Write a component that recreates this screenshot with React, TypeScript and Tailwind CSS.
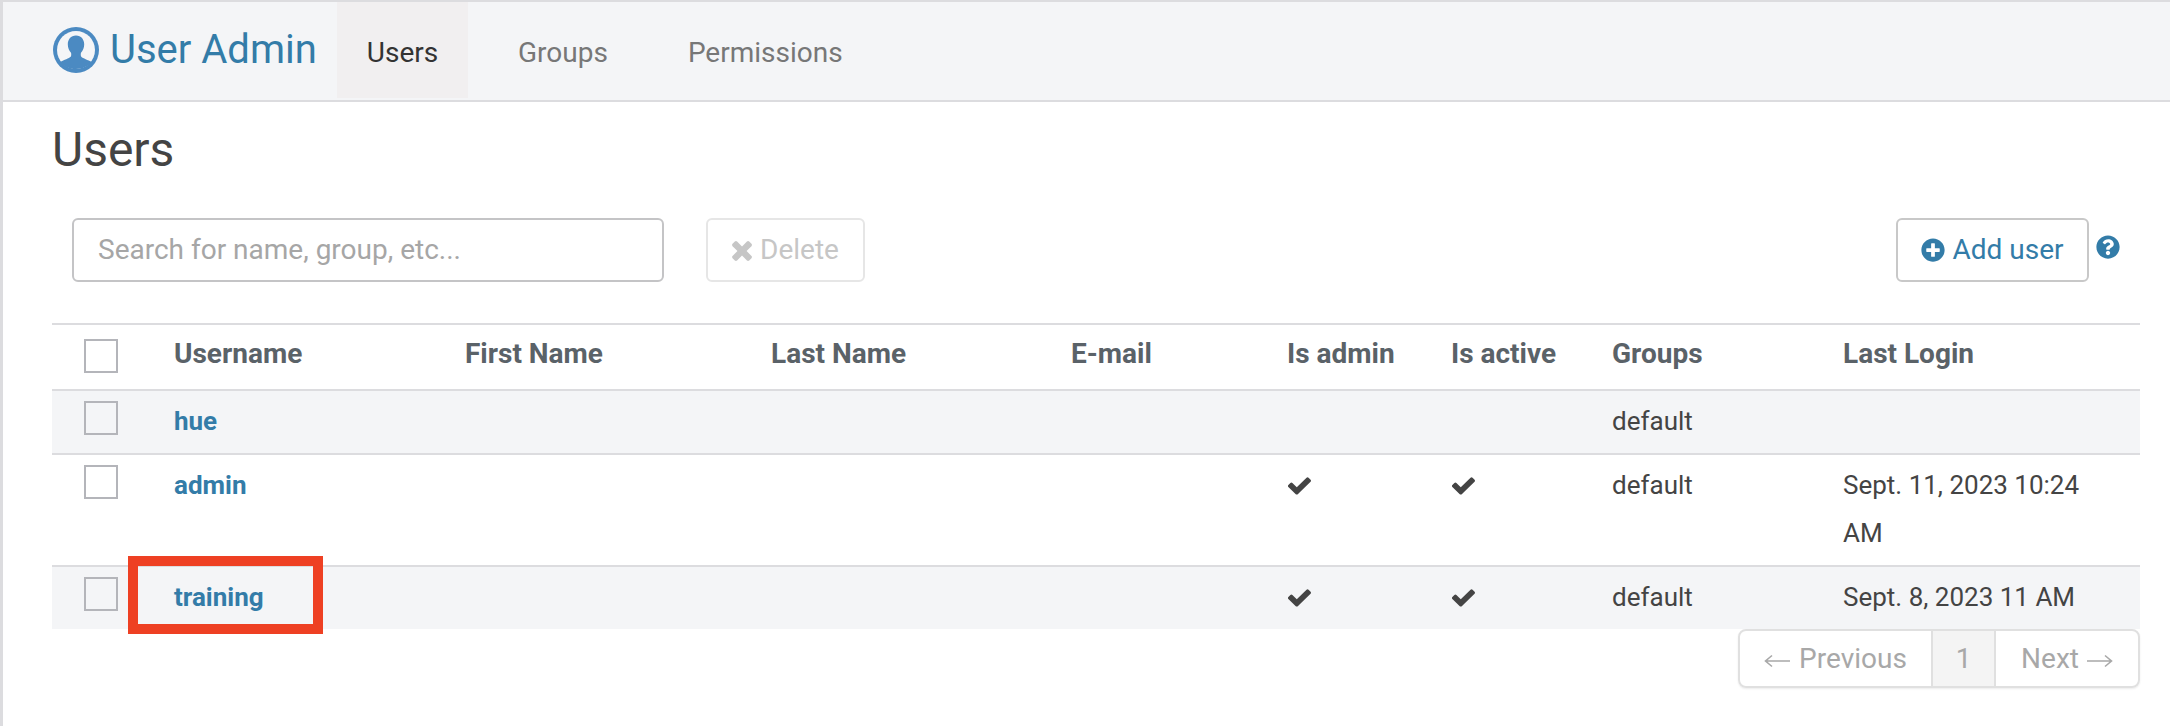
import React from "react";
import { FaPlusCircle, FaQuestionCircle } from "react-icons/fa";

const headers = [
  ["Username", "w-[291px]"],
  ["First Name", "w-[306px]"],
  ["Last Name", "w-[300px]"],
  ["E-mail", "w-[216px]"],
  ["Is admin", "w-[164px]"],
  ["Is active", "w-[161px]"],
  ["Groups", "w-[231px]"],
  ["Last Login", ""],
];

const rows = [
  { name: "hue", admin: false, active: false, login: "" },
  { name: "admin", admin: true, active: true, login: "Sept. 11, 2023 10:24 AM" },
  { name: "training", admin: true, active: true, login: "Sept. 8, 2023 11 AM" },
];

function Logo() {
  return (
    <svg viewBox="0 0 46 46" className="w-[46px] h-[46px] shrink-0">
      <circle cx="23" cy="23" r="23" fill="#4b8ac2" />
      <circle cx="23" cy="23" r="19" fill="#f4f5f7" />
      <path
        d="M23 8.500c-5.200 0-8.200 4-8.200 8.800 0 3.500 1.300 6.400 3.200 8.400.4 1.400.3 3-.3 4-1.600 1.700-6.700 3-10.500 5.300C10.700 39.500 16.500 42 23 42s12.300-2.500 15.800-6.900c-3.800-2.300-8.900-3.700-10.500-5.400-.6-1-.7-2.600-.3-4 1.900-2 3.200-4.900 3.200-8.400 0-4.800-3-8.800-8.200-8.800z"
        fill="#4b8ac2"
      />
    </svg>
  );
}

function Check() {
  return (
    <svg viewBox="125 310 1546 1240" preserveAspectRatio="none" className="w-[23px] h-[18px] mt-[16px] ml-[1px] fill-[#444444]">
      <path d="M1671 566q0 40-28 68l-724 724-136 136q-28 28-68 28t-68-28l-136-136-362-362q-28-28-28-68t28-68l136-136q28-28 68-28t68 28l294 295 656-657q28-28 68-28t68 28l136 136q28 28 28 68z" />
    </svg>
  );
}

function Cross() {
  return (
    <svg viewBox="300 300 1190 1254" className="w-[20px] h-[21px] fill-[#c6c6c6]">
      <path d="M1490 1322q0 40-28 68l-136 136q-28 28-68 28t-68-28l-294-294-294 294q-28 28-68 28t-68-28l-136-136q-28-28-28-68t28-68l294-294-294-294q-28-28-28-68t28-68l136-136q28-28 68-28t68 28l294 294 294-294q28-28 68-28t68 28l136 136q28 28 28 68t-28 68l-294 294 294 294q28 28 28 68z" />
    </svg>
  );
}

function ArrowLeft() {
  return (
    <svg viewBox="0 0 26 14" fill="none" stroke="#a8a8a8" strokeWidth="1.600" className="w-[26px] h-[14px] mt-[5px]">
      <path d="M26 7H2M8 1.500 1.500 7 8 12.500" />
    </svg>
  );
}

function ArrowRight() {
  return (
    <svg viewBox="0 0 26 14" fill="none" stroke="#a8a8a8" strokeWidth="1.600" className="w-[26px] h-[14px] mt-[5px]">
      <path d="M0 7h24M18 1.500 24.500 7 18 12.500" />
    </svg>
  );
}

function Box({ bg }: { bg?: boolean }) {
  return <div className={`w-[34px] h-[34px] border-2 border-[#b4b5ba] ${bg ? "bg-[#f4f5f7]" : "bg-white"}`} />;
}

export default function App() {
  return (
    <div className="w-[2170px] h-[726px] overflow-hidden bg-white border-t-2 border-l-[3px] border-[#dcdcdf] text-[26px] text-[#444444] font-['Roboto',sans-serif]">
      <nav className="h-[100px] flex bg-[#f4f5f7] border-b-2 border-[#dcdcdf] pl-[50px] text-[28px]">
        <div className="flex items-center gap-[11px] w-[284px] pb-[2px]">
          <Logo />
          <span className="text-[40px] text-[#337ca8] leading-none whitespace-nowrap">User Admin</span>
        </div>
        <a className="h-[96px] w-[131px] flex items-center justify-center bg-[#f1eff0] text-[#333333] pt-[6px]">Users</a>
        <a className="h-[96px] pl-[50px] pr-[80px] flex items-center text-[#777777] pt-[6px]">Groups</a>
        <a className="h-[96px] flex items-center text-[#777777] pt-[6px]">Permissions</a>
      </nav>

      <main className="pl-[49px] pr-[30px]">
        <h1 className="text-[48px] leading-[56px] mt-[20px] font-normal text-[#444444]">Users</h1>

        <div className="flex items-center mt-[40px] pl-[20px] text-[28px]">
          <div className="w-[592px] h-[64px] border-2 border-[#c4c4c6] rounded-[6px] flex items-center px-[24px] text-[#a6a6a6]">
            Search for name, group, etc...
          </div>
          <button className="ml-[42px] w-[159px] h-[64px] border-2 border-[#e6e6e6] rounded-[6px] flex items-center justify-center gap-[8px] text-[#c6c6c6]">
            <Cross />
            Delete
          </button>
          <div className="ml-auto flex items-start">
            <button className="w-[193px] h-[64px] border-2 border-[#c8c8c8] rounded-[6px] flex items-center justify-center gap-[7px] text-[#337ca8]">
              <FaPlusCircle className="w-[24px] h-[24px]" />
              Add user
            </button>
            <FaQuestionCircle className="w-[24px] h-[24px] ml-[7px] mt-[17px] mr-[20px] text-[#337ca8]" />
          </div>
        </div>

        <div className="relative mt-[41px]">
          <table className="w-[2088px] table-fixed border-collapse">
            <colgroup>
              <col className="w-[122px]" />
            </colgroup>
            <thead>
              <tr className="border-y-2 border-[#dcdcdf]">
                <th className="h-[66px] p-0 pl-[32px] align-top pt-[14px]">
                  <Box />
                </th>
                {headers.map(([h, w]) => (
                  <th key={h} className={`${w} px-0 pt-[5px] pb-[11px] text-left text-[28px] font-bold text-[#5a6268] leading-[48px] whitespace-nowrap`}>
                    {h}
                  </th>
                ))}
              </tr>
            </thead>
            <tbody>
              {rows.map((r, i) => {
                const odd = i % 2 === 0;
                return (
                  <tr key={r.name} className={`${odd ? "bg-[#f4f5f7]" : "bg-white"} ${i < 2 ? "border-b-2 border-[#dcdcdf]" : ""}`}>
                    <td className="p-0 pl-[32px] pt-[10px] align-top">
                      <Box bg={odd} />
                    </td>
                    <td className="px-0 pt-[6px] pb-[8px] align-top leading-[48px] font-bold text-[#337ca8]">{r.name}</td>
                    <td />
                    <td />
                    <td />
                    <td className="px-0 pt-[6px] pb-[8px] align-top leading-[48px]">{r.admin && <Check />}</td>
                    <td className="px-0 pt-[6px] pb-[8px] align-top leading-[48px]">{r.active && <Check />}</td>
                    <td className="px-0 pt-[6px] pb-[8px] align-top leading-[48px]">default</td>
                    <td className="px-0 pt-[6px] pb-[8px] pr-[20px] align-top leading-[48px]">{r.login}</td>
                  </tr>
                );
              })}
            </tbody>
          </table>
          <div className="absolute left-[76px] top-[233px] w-[195px] h-[78px] border-[10px] border-[#ee4023]" />
        </div>

        <div className="flex justify-end w-[2088px] text-[28px]">
          <div className="flex h-[59px] w-[402px] border-2 border-[#e0e0e0] rounded-[8px] text-[#a8a8a8] overflow-hidden shadow-[0_1px_2px_rgba(0,0,0,0.08)]">
            <span className="w-[191px] flex items-center justify-center gap-[9px]">
              <ArrowLeft />
              Previous
            </span>
            <span className="w-[65px] flex items-center justify-center bg-[#f4f4f4] border-x-2 border-[#e0e0e0]">1</span>
            <span className="flex-1 flex items-center justify-center gap-[8px]">
              Next
              <ArrowRight />
            </span>
          </div>
        </div>
      </main>
    </div>
  );
}
